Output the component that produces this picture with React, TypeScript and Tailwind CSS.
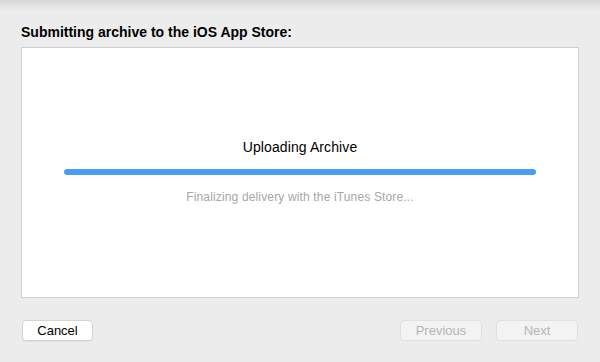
export default function App() {
  return (
    <div
      className="flex h-[362px] w-[600px] flex-col bg-[#ececec] text-black"
      style={{ fontFamily: '"Helvetica Neue", "Liberation Sans", Arial, sans-serif' }}
    >
      <div className="h-[10px] w-full bg-gradient-to-b from-[#d6d6d6] to-[#ececec]" />
      <h1 className="mt-[14px] pl-[21px] text-[14px] font-bold leading-[17px]">
        Submitting archive to the iOS App Store:
      </h1>
      <div className="mx-[21px] mt-[6px] flex h-[251px] flex-col items-center border border-[#cfcfcf] bg-white">
        <div className="mt-[90px] text-[14px] leading-[18px] tracking-[0.1px]">Uploading Archive</div>
        <div className="mt-[13px] h-[6px] w-[472px] rounded-full bg-[#4a9df5]" />
        <div className="mt-[14px] text-[12px] leading-[16px] tracking-[0.15px] text-[#a6a6a6]">
          Finalizing delivery with the iTunes Store...
        </div>
      </div>
      <div className="mt-[22px] flex items-center px-[22px]">
        <button
          type="button"
          className="h-[21px] w-[71px] rounded-[4px] border border-[#d4d4d4] bg-white text-[13px] leading-[19px] shadow-[0_1px_0_rgba(0,0,0,0.05)]"
        >
          Cancel
        </button>
        <div className="ml-auto flex gap-[14px]">
          <button
            type="button"
            className="h-[21px] w-[82px] rounded-[4px] border border-[#e0e0e0] bg-[#f3f3f3] text-[13px] leading-[19px] text-[#b5b5b5]"
          >
            Previous
          </button>
          <button
            type="button"
            className="h-[21px] w-[82px] rounded-[4px] border border-[#e0e0e0] bg-[#f3f3f3] text-[13px] leading-[19px] text-[#b5b5b5]"
          >
            Next
          </button>
        </div>
      </div>
    </div>
  );
}
